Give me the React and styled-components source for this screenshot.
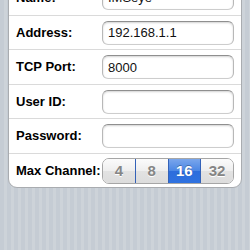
import React from 'react'
import styled, { createGlobalStyle } from 'styled-components'

const GlobalStyle = createGlobalStyle`
  html, body {
    margin: 0;
    padding: 0;
    height: 100%;
    overflow: hidden;
  }
  body {
    font-family: 'Liberation Sans', Arial, sans-serif;
    background: repeating-linear-gradient(
      90deg,
      #c5ccd4 0px,
      #c5ccd4 4px,
      #cdd3d9 4px,
      #cdd3d9 7px
    );
  }
`

const Screen = styled.div`
  padding: 0 8px;
  margin-top: -21px;
`

const Group = styled.div`
  background: #fff;
  border: 1px solid #a9acb0;
  border-radius: 9px;
  overflow: hidden;
`

const Row = styled.div`
  display: flex;
  align-items: center;
  height: 34.5px;
  padding: 0 7px;
  box-sizing: border-box;
  & + & {
    border-top: 1px solid #dadada;
  }
`

const Label = styled.span`
  width: 86px;
  flex: none;
  font-size: 13px;
  font-weight: bold;
  color: #000;
  white-space: nowrap;
`

const Field = styled.input`
  flex: 1;
  min-width: 0;
  height: 24px;
  box-sizing: border-box;
  margin-top: 1px;
  padding: 0 5px;
  font-family: 'Liberation Sans', Arial, sans-serif;
  font-size: 13px;
  color: #111;
  background: #fff;
  border: 1px solid #b8b8b8;
  border-top-color: #8f8f8f;
  border-bottom-color: #cdcdcd;
  border-radius: 6px;
  box-shadow: inset 0 1px 2px rgba(0, 0, 0, 0.18);
  outline: none;
`

const Segmented = styled.div`
  flex: 1;
  display: flex;
  height: 24px;
  margin-top: 1px;
  border: 1px solid #a6a6a6;
  border-radius: 7px;
  overflow: hidden;
`

const Segment = styled.div`
  flex: 1;
  display: flex;
  align-items: center;
  justify-content: center;
  font-size: 15px;
  font-weight: bold;
  color: ${p => (p.$active ? '#fff' : '#858585')};
  background: ${p =>
    p.$active
      ? 'linear-gradient(#7aa6ec 0%, #4a86e4 50%, #2c6ddc 51%, #2f72e0 100%)'
      : 'linear-gradient(#fbfbfb 0%, #eeeeee 50%, #e2e2e2 51%, #dcdcdc 100%)'};
  & + & {
    border-left: 1px solid ${p => (p.$active || p.$afterActive ? '#3462b8' : '#acacac')};
  }
  text-shadow: ${p => (p.$active ? '0 -1px 0 rgba(0,0,0,0.3)' : '0 1px 0 #fff')};
`

const fields = [
  { label: 'Name:', value: 'IMSeye' },
  { label: 'Address:', value: '192.168.1.1' },
  { label: 'TCP Port:', value: '8000' },
  { label: 'User ID:', value: '' },
  { label: 'Password:', value: '' },
]

const channels = [4, 8, 16, 32]

export default function App() {
  const selected = 16
  return (
    <>
      <GlobalStyle />
      <Screen>
        <Group>
          {fields.map(f => (
            <Row key={f.label}>
              <Label>{f.label}</Label>
              <Field defaultValue={f.value} type={f.label === 'Password:' ? 'password' : 'text'} />
            </Row>
          ))}
          <Row>
            <Label>Max Channel:</Label>
            <Segmented>
              {channels.map((c, i) => (
                <Segment
                  key={c}
                  $active={c === selected}
                  $afterActive={i > 0 && channels[i - 1] === selected}
                >
                  {c}
                </Segment>
              ))}
            </Segmented>
          </Row>
        </Group>
      </Screen>
    </>
  )
}
